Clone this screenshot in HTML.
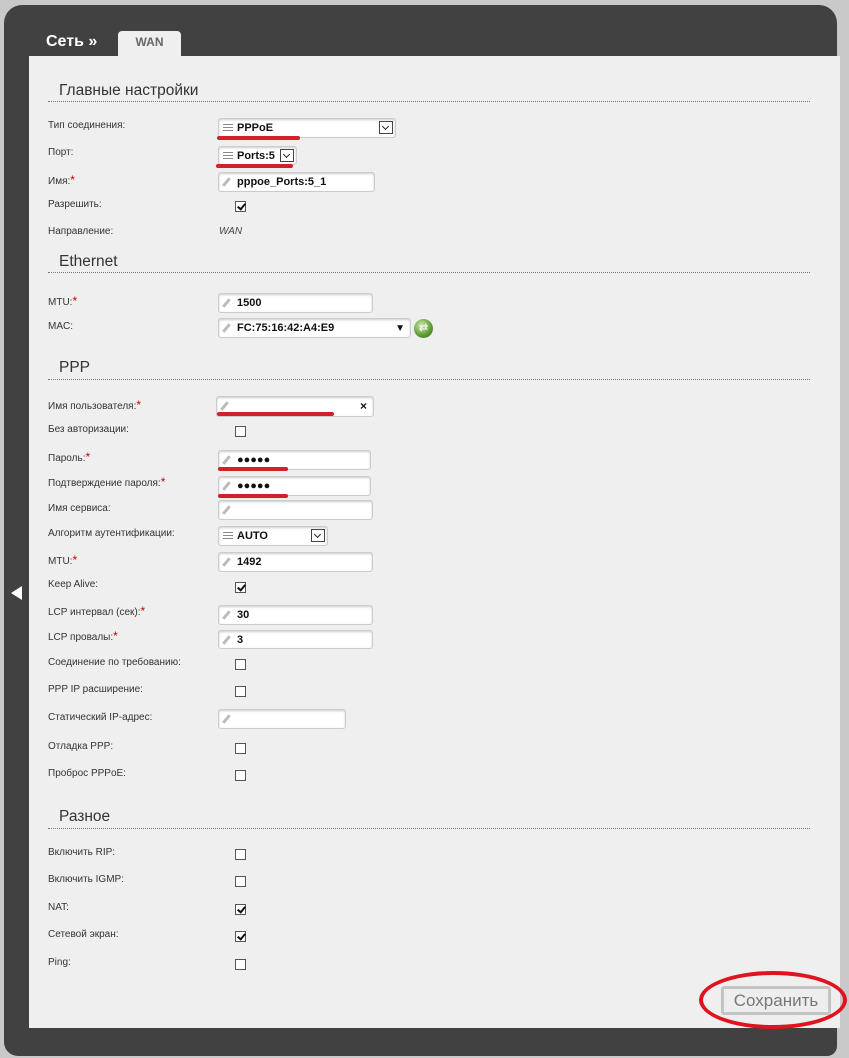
<!DOCTYPE html>
<html><head><meta charset="utf-8"><style>
body{margin:0;width:849px;height:1058px;background:#c9c9c9;position:relative;overflow:hidden;font-family:"Liberation Sans",Arial,sans-serif}
.a{position:absolute}
#dark{left:4px;top:5px;width:833px;height:1051px;background:#414141;border-radius:18px 18px 10px 14px}
#white{left:29px;top:56px;width:811px;height:972px;background:#efefef}
.lbl{position:absolute;left:48px;font-size:10px;color:#333;line-height:12px;margin-top:2px}
.st{color:#c00;font-size:12px;vertical-align:top;line-height:8px}
.hd{position:absolute;left:59px;font-size:15.5px;color:#333;margin-top:1px}
.ln{position:absolute;left:48px;width:762px;border-top:1px dotted #777}
.in{position:absolute;background:#fff;border:1px solid #ccc;border-radius:3px;box-shadow:inset 0 1px 2px #ccc;font-size:11px;font-weight:bold;color:#111;box-sizing:border-box;padding-left:18px;line-height:19px}
.in:before{content:"";position:absolute;left:6px;top:4px;width:3px;height:10px;background:#bbb;transform:rotate(40deg)}
.sel:before{left:4px;top:5px;width:10px;height:7px;background:repeating-linear-gradient(#888 0 1px,transparent 1px 3px);transform:none}
.dd{position:absolute;right:2px;top:2px;width:14px;height:13px;border:1px solid #444;box-sizing:border-box;background:#fff}
.dd:after{content:"";position:absolute;left:3px;top:2px;width:4px;height:4px;border-right:1.5px solid #222;border-bottom:1.5px solid #222;transform:rotate(45deg)}
.cb{position:absolute;left:235px;width:11px;height:11px;border:1px solid #555;background:#fff;box-sizing:border-box;margin-top:1px}
.cb.c:after{content:"";position:absolute;left:3px;top:0px;width:3px;height:6px;border-right:2px solid #111;border-bottom:2px solid #111;transform:rotate(40deg)}
.red{position:absolute;height:4px;background:#d0202a;border-radius:2px}
</style></head><body>
<div class="a" id="dark"></div>
<div class="a" style="left:46px;top:33px;color:#fff;font-weight:bold;font-size:16px">Сеть »</div>
<div class="a" style="left:118px;top:31px;width:63px;height:26px;background:#efefef;border-radius:4px 4px 0 0;color:#666;font-weight:bold;font-size:12px;text-align:center;line-height:22px">WAN</div>
<div class="a" id="white"></div>
<div class="a" style="left:11px;top:586px;width:0;height:0;border-top:7px solid transparent;border-bottom:7px solid transparent;border-right:11px solid #fff"></div>

<div class="hd" style="top:81px">Главные настройки</div><div class="ln" style="top:101px"></div>
<div class="lbl" style="top:118px">Тип соединения:</div>
<div class="lbl" style="top:145px">Порт:</div>
<div class="lbl" style="top:174px">Имя:<span class="st">*</span></div>
<div class="lbl" style="top:197px">Разрешить:</div>
<div class="lbl" style="top:224px">Направление:</div>
<div class="a" style="left:219px;top:226px;font-size:10px;font-style:italic;color:#444">WAN</div>
<div class="in sel" style="left:218px;top:118px;width:178px;height:20px">PPPoE<div class="dd"></div></div>
<div class="red" style="left:217px;top:136px;width:83px"></div>
<div class="in sel" style="left:218px;top:146px;width:79px;height:19px">Ports:5<div class="dd"></div></div>
<div class="red" style="left:216px;top:164px;width:77px"></div>
<div class="in" style="left:218px;top:172px;width:157px;height:20px">pppoe_Ports:5_1</div>
<div class="cb c" style="top:200px"></div>

<div class="hd" style="top:252px">Ethernet</div><div class="ln" style="top:272px"></div>
<div class="lbl" style="top:295px">MTU:<span class="st">*</span></div>
<div class="lbl" style="top:319px">MAC:</div>
<div class="in" style="left:218px;top:293px;width:155px;height:20px">1500</div>
<div class="in" style="left:218px;top:318px;width:193px;height:20px">FC:75:16:42:A4:E9<span style="position:absolute;right:5px;font-size:10px">▼</span></div>
<div class="a" style="left:414px;top:319px;width:19px;height:19px;border-radius:50%;background:radial-gradient(circle at 40% 35%,#cfe8b0,#5a9a30 60%,#3a6a20);font-size:11px;color:#fff;text-align:center;line-height:19px">⇄</div>

<div class="hd" style="top:358px">PPP</div><div class="ln" style="top:379px"></div>
<div class="lbl" style="top:399px">Имя пользователя:<span class="st">*</span></div>
<div class="lbl" style="top:422px">Без авторизации:</div>
<div class="lbl" style="top:451px">Пароль:<span class="st">*</span></div>
<div class="lbl" style="top:476px">Подтверждение пароля:<span class="st">*</span></div>
<div class="lbl" style="top:501px">Имя сервиса:</div>
<div class="lbl" style="top:526px">Алгоритм аутентификации:</div>
<div class="lbl" style="top:554px">MTU:<span class="st">*</span></div>
<div class="lbl" style="top:577px">Keep Alive:</div>
<div class="lbl" style="top:605px">LCP интервал (сек):<span class="st">*</span></div>
<div class="lbl" style="top:630px">LCP провалы:<span class="st">*</span></div>
<div class="lbl" style="top:655px">Соединение по требованию:</div>
<div class="lbl" style="top:682px">PPP IP расширение:</div>
<div class="lbl" style="top:710px">Статический IP-адрес:</div>
<div class="lbl" style="top:739px">Отладка PPP:</div>
<div class="lbl" style="top:766px">Проброс PPPoE:</div>
<div class="in" style="left:216px;top:396px;width:158px;height:21px"><span style="position:absolute;right:6px;font-size:12px">×</span></div>
<div class="red" style="left:217px;top:412px;width:117px"></div>
<div class="cb" style="top:425px"></div>
<div class="in" style="left:218px;top:450px;width:153px;height:20px">●●●●●</div>
<div class="red" style="left:218px;top:467px;width:70px"></div>
<div class="in" style="left:218px;top:476px;width:153px;height:20px">●●●●●</div>
<div class="red" style="left:218px;top:494px;width:70px"></div>
<div class="in" style="left:218px;top:500px;width:155px;height:20px"></div>
<div class="in sel" style="left:218px;top:526px;width:110px;height:20px">AUTO<div class="dd"></div></div>
<div class="in" style="left:218px;top:552px;width:155px;height:20px">1492</div>
<div class="cb c" style="top:581px"></div>
<div class="in" style="left:218px;top:605px;width:155px;height:20px">30</div>
<div class="in" style="left:218px;top:630px;width:155px;height:19px">3</div>
<div class="cb" style="top:658px"></div>
<div class="cb" style="top:685px"></div>
<div class="in" style="left:218px;top:709px;width:128px;height:20px"></div>
<div class="cb" style="top:742px"></div>
<div class="cb" style="top:769px"></div>

<div class="hd" style="top:807px">Разное</div><div class="ln" style="top:828px"></div>
<div class="lbl" style="top:845px">Включить RIP:</div>
<div class="lbl" style="top:872px">Включить IGMP:</div>
<div class="lbl" style="top:900px">NAT:</div>
<div class="lbl" style="top:927px">Сетевой экран:</div>
<div class="lbl" style="top:955px">Ping:</div>
<div class="cb" style="top:848px"></div>
<div class="cb" style="top:875px"></div>
<div class="cb c" style="top:903px"></div>
<div class="cb c" style="top:930px"></div>
<div class="cb" style="top:958px"></div>

<div class="a" style="left:721px;top:986px;width:110px;height:29px;border:3px solid #c4c4c4;border-radius:3px;background:#eee;box-sizing:border-box;color:#777;font-size:17px;text-align:center;line-height:23px">Сохранить</div>
<div class="a" style="left:699px;top:971px;width:148px;height:58px;border:4px solid #e0141e;border-radius:50%;box-sizing:border-box"></div>
</body></html>
